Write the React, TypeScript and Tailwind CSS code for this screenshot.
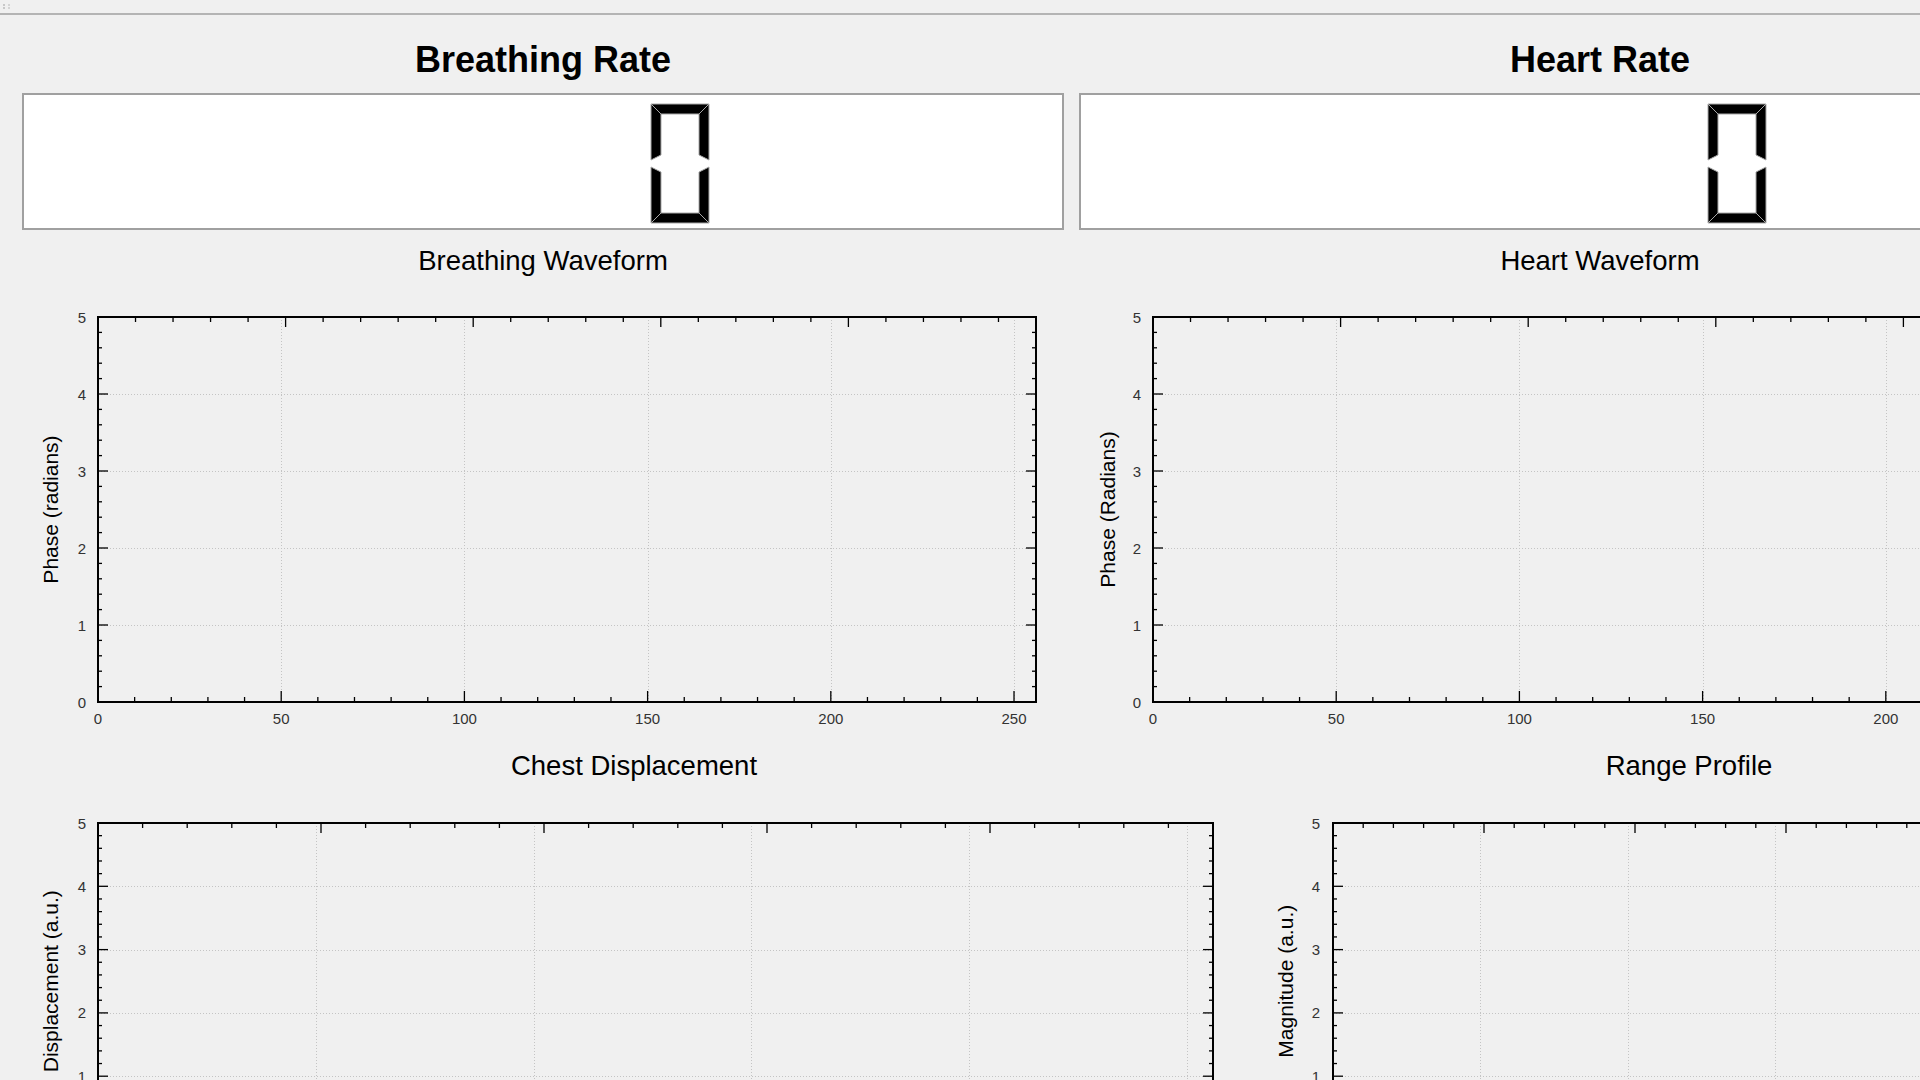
import React from "react";

const SANS = "'Liberation Sans', Arial, sans-serif";

type PlotProps = {
  width: number;
  height: number;
  fx: number;
  fy: number;
  fw: number;
  fh: number;
  yTitle: string;
  yTitleX: number;
  labelX: number;
};

const BOTTOM_MAX = 256;
const TOP_MAX = 250;
const Y_MAX = 5;

function Plot({ width, height, fx, fy, fw, fh, yTitle, yTitleX, labelX }: PlotProps) {
  const bx = (v: number) => fx + (v / BOTTOM_MAX) * fw;
  const tx = (v: number) => fx + (v / TOP_MAX) * fw;
  const yy = (v: number) => fy + fh - (v / Y_MAX) * fh;
  const bottom = fy + fh;
  const right = fx + fw;

  const bottomTicks: number[] = [];
  for (let v = 10; v < BOTTOM_MAX; v += 10) bottomTicks.push(v);
  const topTicks: number[] = [];
  for (let v = 10; v < TOP_MAX; v += 10) topTicks.push(v);
  const yTicks: number[] = [];
  for (let i = 1; i < 25; i++) yTicks.push(i / 5);

  const gridX = [50, 100, 150, 200, 250];
  const gridY = [1, 2, 3, 4];
  const yLabels = [0, 1, 2, 3, 4, 5];
  const xLabels = [0, 50, 100, 150, 200, 250];

  return (
    <svg width={width} height={height} className="block" style={{ fontFamily: SANS }}>
      {/* dotted grid */}
      <g stroke="#c4c4c4" strokeWidth={1} strokeDasharray="1 2" shapeRendering="crispEdges">
        {gridX.map((v) => (
          <line key={`gx${v}`} x1={Math.round(bx(v)) + 0.5} x2={Math.round(bx(v)) + 0.5} y1={fy} y2={bottom} />
        ))}
        {gridY.map((v) => (
          <line key={`gy${v}`} x1={fx} x2={right} y1={Math.round(yy(v)) + 0.5} y2={Math.round(yy(v)) + 0.5} />
        ))}
      </g>

      {/* tick marks on all four sides */}
      <g stroke="#000" strokeWidth={1.3}>
        {bottomTicks.map((v) => {
          const x = bx(v);
          const len = v % 50 === 0 ? 11 : 5;
          return <line key={`bt${v}`} x1={x} x2={x} y1={bottom} y2={bottom - len} />;
        })}
        {topTicks.map((v) => {
          const x = tx(v);
          const len = v % 50 === 0 ? 10 : 5;
          return <line key={`tt${v}`} x1={x} x2={x} y1={fy} y2={fy + len} />;
        })}
        {yTicks.map((v) => {
          const y = yy(v);
          const major = Math.abs(v - Math.round(v)) < 1e-6;
          const len = major ? 10 : 4;
          return (
            <g key={`yt${v}`}>
              <line x1={fx} x2={fx + len} y1={y} y2={y} />
              <line x1={right} x2={right - len} y1={y} y2={y} />
            </g>
          );
        })}
      </g>

      {/* frame */}
      <rect x={fx} y={fy} width={fw} height={fh} fill="none" stroke="#000" strokeWidth={2} />

      {/* tick labels */}
      <g fill="#333" fontSize={15}>
        {yLabels.map((v) => (
          <text key={`yl${v}`} x={labelX} y={yy(v)} textAnchor="middle" dominantBaseline="central">
            {v}
          </text>
        ))}
        {xLabels.map((v) => (
          <text key={`xl${v}`} x={bx(v)} y={bottom + 16} textAnchor="middle" dominantBaseline="central">
            {v}
          </text>
        ))}
      </g>

      {/* axis title */}
      <text
        transform={`translate(${yTitleX}, ${fy + fh / 2}) rotate(-90)`}
        textAnchor="middle"
        dominantBaseline="central"
        fontSize={21}
        fill="#000"
      >
        {yTitle}
      </text>
    </svg>
  );
}

function SevenSegZero() {
  const seg = [
    "0,0 58,0 48,10 10,10",
    "0,119 58,119 48,109 10,109",
    "0,0 10,10 10,51 0,56",
    "0,63 10,68 10,109 0,119",
    "58,0 58,56 48,51 48,10",
    "58,63 58,119 48,109 48,68",
  ];
  return (
    <svg width={60} height={121} viewBox="-1 -1 60 121" className="block">
      {seg.map((p) => (
        <polygon key={p} points={p} fill="#000" stroke="#a8a8a8" strokeWidth={1} strokeLinejoin="miter" />
      ))}
    </svg>
  );
}

function RateColumn({
  title,
  subtitle,
  yTitle,
  frameLeft,
}: {
  title: string;
  subtitle: string;
  yTitle: string;
  frameLeft: number;
}) {
  return (
    <div className="flex w-[1042px] shrink-0 flex-col items-center" style={{ fontFamily: SANS }}>
      <div className="mt-[25px] h-[40px] text-[36px] font-bold leading-[40px] text-black">{title}</div>
      <div className="mt-[13px] flex h-[137px] w-full border-2 border-[#a0a0a0] bg-white pl-[626px] pt-[8px]">
        <SevenSegZero />
      </div>
      <div className="mt-[15px] h-[32px] text-[27.5px] leading-[32px] text-black">{subtitle}</div>
      <div className="self-stretch">
        <Plot
          width={1042}
          height={455}
          fx={frameLeft}
          fy={40}
          fw={938}
          fh={385}
          yTitle={yTitle}
          yTitleX={28}
          labelX={frameLeft - 16}
        />
      </div>
    </div>
  );
}

function BottomColumn({
  width,
  title,
  yTitle,
  fx,
  fw,
  yTitleX,
  labelX,
}: {
  width: number;
  title: string;
  yTitle: string;
  fx: number;
  fw: number;
  yTitleX: number;
  labelX: number;
}) {
  return (
    <div className="flex shrink-0 flex-col items-center" style={{ width, fontFamily: SANS }}>
      <div className="mt-[18px] h-[32px] text-[27.5px] leading-[32px] text-black">{title}</div>
      <div className="self-stretch">
        <Plot
          width={width}
          height={400}
          fx={fx}
          fy={41}
          fw={fw}
          fh={316.5}
          yTitle={yTitle}
          yTitleX={yTitleX}
          labelX={labelX}
        />
      </div>
    </div>
  );
}

export default function App() {
  return (
    <div className="h-[1080px] w-[1920px] overflow-hidden bg-[#f0f0f0]">
      <div className="w-[2140px]">
        {/* window strip with grip */}
        <div className="flex h-[13px] items-start pl-[3px] pt-[4px]">
          <svg width={8} height={6} className="block">
            <rect x={0} y={0} width={2} height={2} fill="#c8c8c8" />
            <rect x={0} y={3} width={2} height={2} fill="#c8c8c8" />
            <rect x={5} y={0} width={2} height={2} fill="#d4d4d4" />
            <rect x={5} y={3} width={2} height={2} fill="#d4d4d4" />
          </svg>
        </div>
        <div className="h-[2px] bg-[#b4b4b4]" />

        {/* rate readouts with waveform plots */}
        <div className="flex gap-[15px] pl-[22px]">
          <RateColumn
            title="Breathing Rate"
            subtitle="Breathing Waveform"
            yTitle="Phase (radians)"
            frameLeft={76}
          />
          <RateColumn
            title="Heart Rate"
            subtitle="Heart Waveform"
            yTitle="Phase (Radians)"
            frameLeft={74}
          />
        </div>

        {/* displacement and range profile */}
        <div className="flex">
          <BottomColumn
            width={1268}
            title="Chest Displacement"
            yTitle="Displacement (a.u.)"
            fx={98}
            fw={1115}
            yTitleX={50}
            labelX={82}
          />
          <BottomColumn
            width={842}
            title="Range Profile"
            yTitle="Magnitude (a.u.)"
            fx={65}
            fw={755}
            yTitleX={17}
            labelX={48}
          />
        </div>
      </div>
    </div>
  );
}
